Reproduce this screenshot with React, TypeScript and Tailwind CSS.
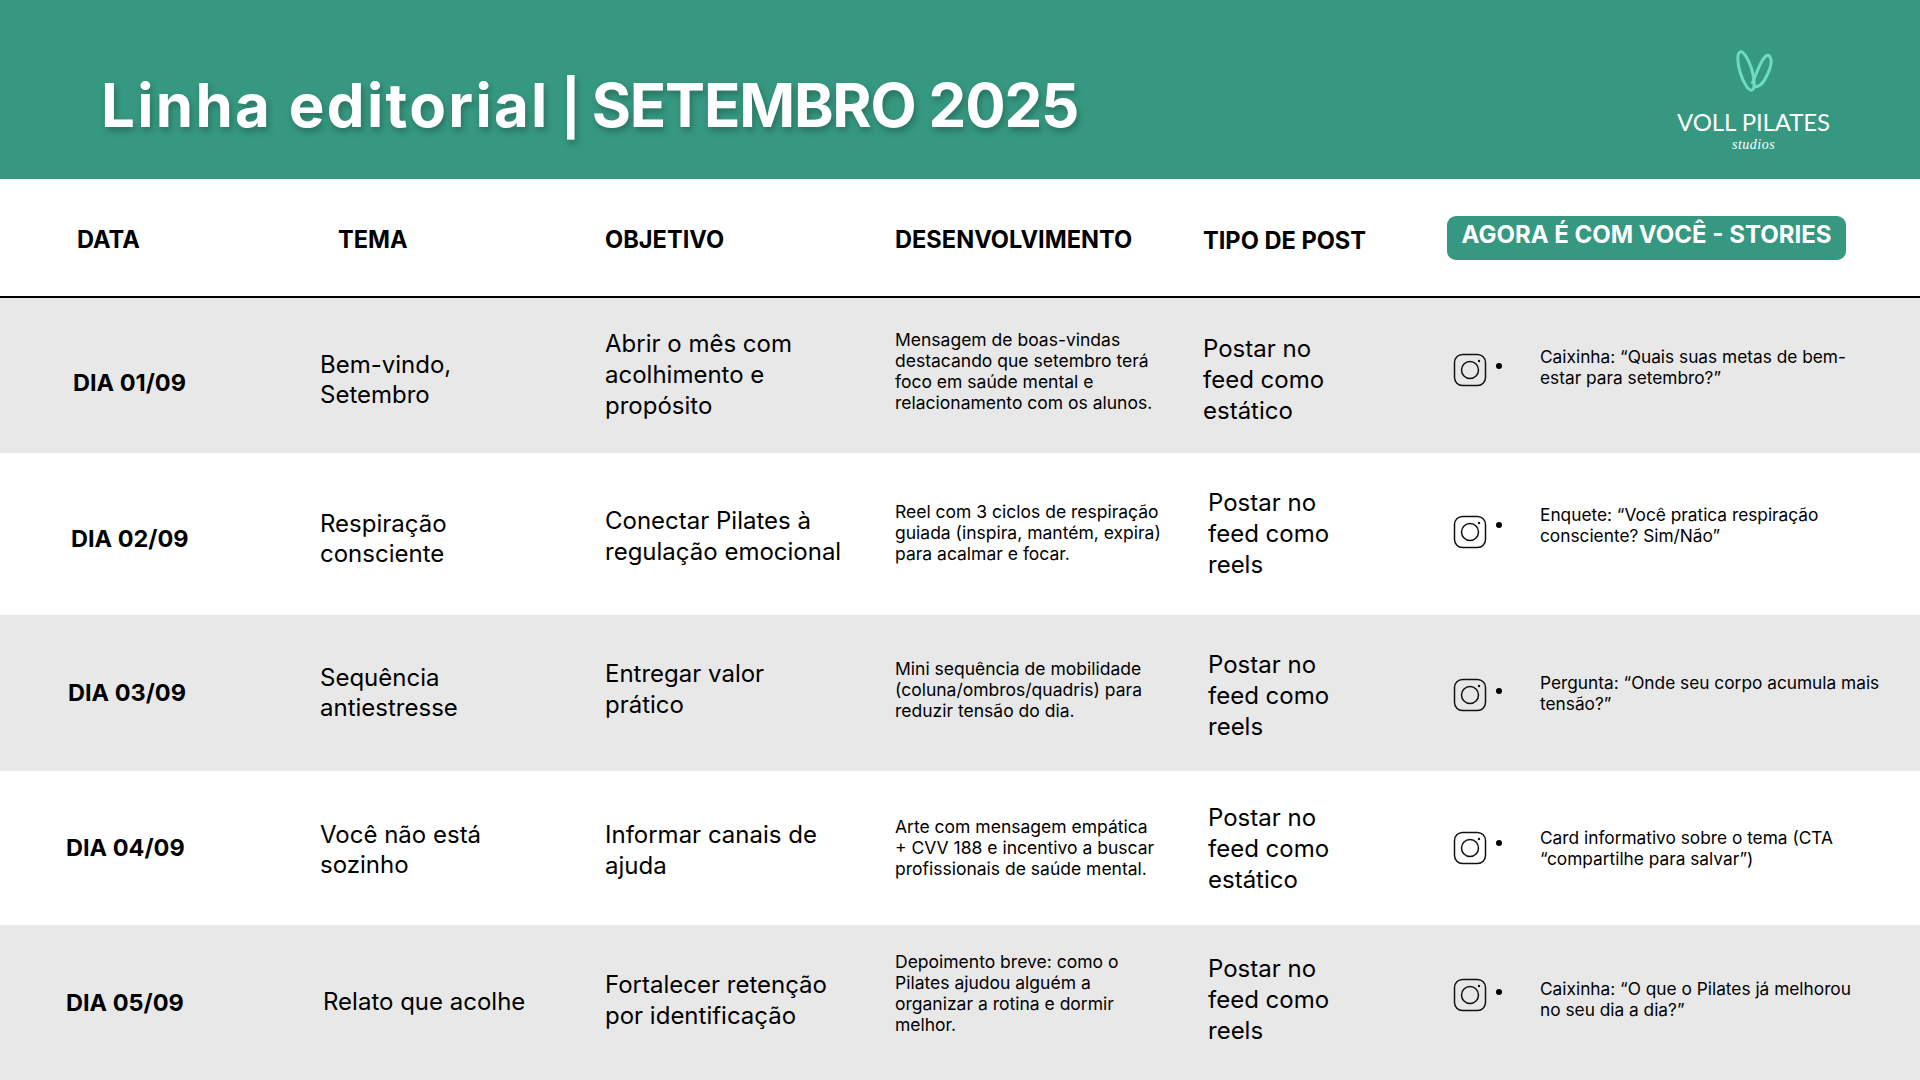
const rows = [
  {
    date: 'DIA 01/09',
    dateCls: 'pl-[73px] pt-[14px]',
    theme: ['Bem-vindo,', 'Setembro'],
    themeCls: 'pt-[8px]',
    goal: ['Abrir o mês com', 'acolhimento e', 'propósito'],
    goalCls: 'pb-[2px]',
    dev: ['Mensagem de boas-vindas', 'destacando que setembro terá', 'foco em saúde mental e', 'relacionamento com os alunos.'],
    devCls: 'pb-[10px]',
    post: ['Postar no', 'feed como', 'estático'],
    postCls: 'pt-[8px]',
    iconCls: 'pb-[12px]',
    dotCls: '-mt-[8px]',
    story: ['Caixinha: “Quais suas metas de bem-', 'estar para setembro?”'],
    storyCls: 'pb-[17px]',
    bg: 'bg-[#e8e8e8]',
    h: 'h-[155px]',
  },
  {
    date: 'DIA 02/09',
    dateCls: 'pl-[71px] pt-[10px]',
    theme: ['Respiração', 'consciente'],
    themeCls: 'pt-[10px]',
    goal: ['Conectar Pilates à', 'regulação emocional'],
    goalCls: 'pt-[4px]',
    dev: ['Reel com 3 ciclos de respiração', 'guiada (inspira, mantém, expira)', 'para acalmar e focar.'],
    devCls: 'pb-[4px]',
    post: ['Postar no', 'feed como', 'reels'],
    postCls: 'pl-[5px] pb-[2px]',
    iconCls: 'pb-[4px]',
    dotCls: '-mt-[14px]',
    story: ['Enquete: “Você pratica respiração', 'consciente? Sim/Não”'],
    storyCls: 'pb-[18px]',
    bg: 'bg-white',
    h: 'h-[162px]',
  },
  {
    date: 'DIA 03/09',
    dateCls: 'pl-[68px]',
    theme: ['Sequência', 'antiestresse'],
    themeCls: '',
    goal: ['Entregar valor', 'prático'],
    goalCls: 'pb-[8px]',
    dev: ['Mini sequência de mobilidade', '(coluna/ombros/quadris) para', 'reduzir tensão do dia.'],
    devCls: 'pb-[8px]',
    post: ['Postar no', 'feed como', 'reels'],
    postCls: 'pl-[5px] pt-[4px]',
    iconCls: 'pt-[4px]',
    dotCls: '-mt-[8px]',
    story: ['Pergunta: “Onde seu corpo acumula mais', 'tensão?”'],
    storyCls: '',
    bg: 'bg-[#e8e8e8]',
    h: 'h-[156px]',
  },
  {
    date: 'DIA 04/09',
    dateCls: 'pl-[66px]',
    theme: ['Você não está', 'sozinho'],
    themeCls: 'pt-[4px]',
    goal: ['Informar canais de', 'ajuda'],
    goalCls: 'pt-[4px]',
    dev: ['Arte com mensagem empática', '+ CVV 188 e incentivo a buscar', 'profissionais de saúde mental.'],
    devCls: 'pb-[2px]',
    post: ['Postar no', 'feed como', 'estático'],
    postCls: 'pl-[5px]',
    iconCls: '',
    dotCls: '-mt-[10px]',
    story: ['Card informativo sobre o tema (CTA', '“compartilhe para salvar”)'],
    storyCls: '',
    bg: 'bg-white',
    h: 'h-[154px]',
  },
  {
    date: 'DIA 05/09',
    dateCls: 'pl-[66px]',
    theme: ['Relato que acolhe'],
    themeCls: 'pl-[3px] pb-[2px]',
    goal: ['Fortalecer retenção', 'por identificação'],
    goalCls: 'pb-[6px]',
    dev: ['Depoimento breve: como o', 'Pilates ajudou alguém a', 'organizar a rotina e dormir', 'melhor.'],
    devCls: 'pb-[20px]',
    post: ['Postar no', 'feed como', 'reels'],
    postCls: 'pl-[5px] pb-[6px]',
    iconCls: 'pb-[16px]',
    dotCls: '-mt-[6px]',
    story: ['Caixinha: “O que o Pilates já melhorou', 'no seu dia a dia?”'],
    storyCls: 'pb-[8px]',
    bg: 'bg-[#e8e8e8]',
    h: 'h-[155px]',
  },
];

function InstaIcon() {
  return (
    <svg width="34" height="34" viewBox="0 0 34 34" fill="none" stroke="#111" strokeWidth="1.5">
      <rect x="1.5" y="1.5" width="31" height="31" rx="8" />
      <circle cx="17" cy="17" r="8.5" />
      <circle cx="26" cy="8" r="1.2" fill="#111" stroke="none" />
    </svg>
  );
}

function VollLogo() {
  return (
    <svg width="38" height="42" viewBox="0 0 38 42" fill="none" stroke="#6fdcc0" strokeWidth="3">
      <ellipse cx="11" cy="21" rx="6" ry="20" transform="rotate(-17 11 21)" />
      <path d="M19 37C23 37 27 35 30 29C34 22 38 12 35 7C33 3 30 6 27 11C23 18 20 27 17 34" />
    </svg>
  );
}

function Lines({ items }: { items: string[] }) {
  return (
    <>
      {items.map((l) => (
        <div key={l} className="whitespace-nowrap">{l}</div>
      ))}
    </>
  );
}

export default function App() {
  return (
    <div className="w-[1920px] h-[1080px] overflow-hidden bg-white text-black font-['Inter',sans-serif]">
      {/* topo */}
      <header className="h-[179px] bg-[#369880] flex items-start justify-between pl-[101px] pr-[90px]">
        <h1 className="self-center pt-[30px] text-[60px] font-bold text-white whitespace-nowrap [text-shadow:2px_4px_6px_rgba(0,0,0,0.25)]">
          <span className="tracking-[2.3px]">Linha editorial</span>
          <span className="text-[54px] px-[11px]">|</span>
          <span className="tracking-[-1.2px]">SETEMBRO 2025</span>
        </h1>
        <div className="flex flex-col items-center text-white pt-[50px]">
          <VollLogo />
          <div className="text-[24px] leading-[26px] mt-[17px] tracking-[-0.1px] font-['Lato',sans-serif]">VOLL PILATES</div>
          <div className="text-[14px] leading-[12px] mt-[4px] tracking-[0.5px] italic font-['Liberation_Serif',serif]">studios</div>
        </div>
      </header>

      {/* cabeçalho da tabela */}
      <div className="h-[119px] border-b-2 border-black font-bold text-[23.6px] grid grid-cols-[338px_267px_290px_308px_244px_1fr] items-center">
        <div className="pl-[77px] pt-[5px]">DATA</div>
        <div className="pt-[5px]">TEMA</div>
        <div className="pt-[5px]">OBJETIVO</div>
        <div className="pt-[5px]">DESENVOLVIMENTO</div>
        <div className="pt-[6px]">TIPO DE POST</div>
        <div>
          <span className="inline-block w-[399px] h-[44px] leading-[38px] rounded-[9px] bg-[#369880] text-white text-center text-[24px]">
            AGORA É COM VOCÊ - STORIES
          </span>
        </div>
      </div>

      {rows.map((r) => (
        <div key={r.date} className={`grid grid-cols-[320px_285px_290px_308px_244px_1fr] items-center ${r.bg} ${r.h}`}>
          <div className={`font-bold text-[23.5px] whitespace-nowrap ${r.dateCls}`}>{r.date}</div>
          <div className={`text-[24px] leading-[30px] ${r.themeCls}`}><Lines items={r.theme} /></div>
          <div className={`text-[24px] leading-[31px] ${r.goalCls}`}><Lines items={r.goal} /></div>
          <div className={`text-[17.5px] leading-[21px] ${r.devCls}`}><Lines items={r.dev} /></div>
          <div className={`text-[24px] leading-[31px] ${r.postCls}`}><Lines items={r.post} /></div>
          <div className="flex items-center pl-[6px]">
            <div className={`flex items-center ${r.iconCls}`}>
              <InstaIcon />
              <span className={`w-[6px] h-[6px] rounded-full bg-black ml-[9px] mr-[38px] ${r.dotCls}`} />
            </div>
            <div className={`text-[17.3px] leading-[21px] ${r.storyCls}`}><Lines items={r.story} /></div>
          </div>
        </div>
      ))}
    </div>
  );
}
